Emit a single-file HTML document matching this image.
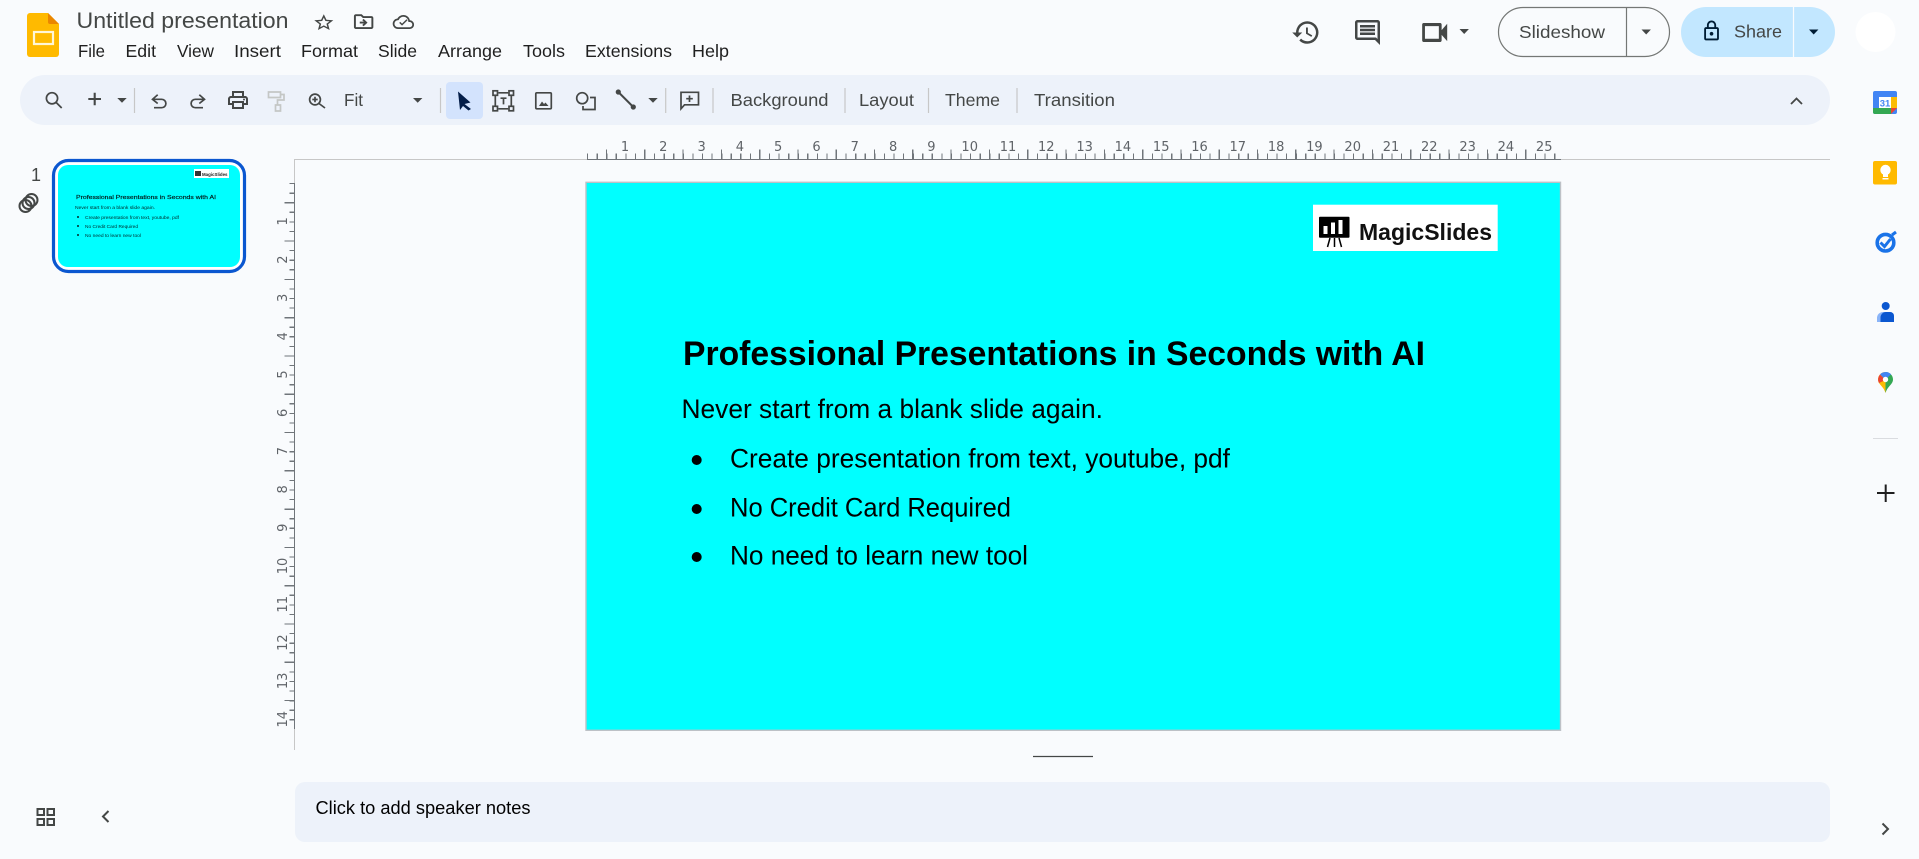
<!DOCTYPE html>
<html lang="en"><head><meta charset="utf-8"><title>Untitled presentation</title>
<style>html,body{margin:0;padding:0;background:#f9fbfd;overflow:hidden}svg{display:block}text{font-family:"Liberation Sans",Arial,sans-serif}</style></head>
<body>
<svg width="1919" height="859" viewBox="0 0 1919 859" xmlns="http://www.w3.org/2000/svg">
<rect width="1919" height="859" fill="#f9fbfd"/>

<!-- app logo -->
<path d="M30 13H48L59 24V54a3 3 0 0 1-3 3H30a3 3 0 0 1-3-3V16a3 3 0 0 1 3-3z" fill="#ffba00"/>
<path d="M48 13L59 24H50a2 2 0 0 1-2-2z" fill="#ea8600"/>
<rect x="34" y="32" width="19" height="12" fill="none" stroke="#fff6d6" stroke-width="2.2"/>

<!-- title + menus -->
<text x="76.5" y="28" font-size="22.5" fill="#444746" textLength="212" lengthAdjust="spacingAndGlyphs">Untitled presentation</text>
<g fill="#444746">
<path transform="translate(312.4,12.6) scale(.95,.83)" d="M22 9.24l-7.19-.62L12 2 9.19 8.63 2 9.24l5.46 4.73L5.82 21 12 17.27 18.18 21l-1.63-7.03L22 9.24zM12 15.4l-3.76 2.27 1-4.28-3.32-2.88 4.38-.38L12 6.1l1.71 4.04 4.38.38-3.32 2.88 1 4.28L12 15.4z"/>
<path transform="translate(352,10.6) scale(.97,.92)" d="M20 6h-8l-2-2H4c-1.1 0-2 .9-2 2v12c0 1.1.9 2 2 2h16c1.1 0 2-.9 2-2V8c0-1.1-.9-2-2-2zm0 12H4V6h5.17l2 2H20v10zm-8.01-9l-1.41 1.41L12.16 12H8v2h4.16l-1.59 1.59L11.99 17 16 13.01 11.99 9z"/>
<path transform="translate(392.7,11.5) scale(.89,.875)" d="M19.35 10.04C18.67 6.59 15.64 4 12 4 9.11 4 6.6 5.64 5.35 8.04 2.34 8.36 0 10.91 0 14c0 3.31 2.69 6 6 6h13c2.76 0 5-2.24 5-5 0-2.64-2.05-4.78-4.65-4.96zM19 18H6c-2.21 0-4-1.79-4-4 0-2.05 1.53-3.76 3.56-3.97l1.07-.11.5-.95C8.08 7.14 9.94 6 12 6c2.62 0 4.88 1.86 5.39 4.43l.3 1.5 1.53.11c1.56.1 2.78 1.41 2.78 2.96 0 1.65-1.35 3-3 3z"/>
<path transform="translate(392.7,11.5) scale(.89,.875)" d="M10.5 16.2l-3.2-3.2 1.2-1.2 2 2 5-5 1.2 1.2z"/>
</g>
<g font-size="17.5" fill="#1f1f1f">
<text x="78" y="57" textLength="27" lengthAdjust="spacingAndGlyphs">File</text>
<text x="125.5" y="57" textLength="30.5" lengthAdjust="spacingAndGlyphs">Edit</text>
<text x="177" y="57" textLength="37" lengthAdjust="spacingAndGlyphs">View</text>
<text x="234" y="57" textLength="47" lengthAdjust="spacingAndGlyphs">Insert</text>
<text x="301" y="57" textLength="57" lengthAdjust="spacingAndGlyphs">Format</text>
<text x="378" y="57" textLength="39" lengthAdjust="spacingAndGlyphs">Slide</text>
<text x="438" y="57" textLength="64" lengthAdjust="spacingAndGlyphs">Arrange</text>
<text x="523" y="57" textLength="42" lengthAdjust="spacingAndGlyphs">Tools</text>
<text x="585" y="57" textLength="87" lengthAdjust="spacingAndGlyphs">Extensions</text>
<text x="692" y="57" textLength="37" lengthAdjust="spacingAndGlyphs">Help</text>
</g>

<!-- top right -->
<g fill="#444746">
<path transform="translate(1291,17.5) scale(1.25)" d="M13 3a9 9 0 0 0-9 9H1l3.89 3.89.07.14L9 12H6c0-3.87 3.13-7 7-7s7 3.13 7 7-3.13 7-7 7c-1.93 0-3.68-.79-4.94-2.06l-1.42 1.42A8.954 8.954 0 0 0 13 21a9 9 0 0 0 0-18zm-1 5v5l4.28 2.54.72-1.21-3.5-2.08V8H12z"/>
<path transform="translate(1352.5,17.5) scale(1.25)" d="M21.99 4c0-1.1-.89-2-1.99-2H4c-1.1 0-2 .9-2 2v12c0 1.1.9 2 2 2h14l4 4-.01-18zM20 4v13.17L18.83 16H4V4h16zM6 12h12v2H6zm0-3h12v2H6zm0-3h12v2H6z"/>
<path transform="translate(1418,13.5) scale(1.39,1.58)" d="M15 8v8H5V8h10m1-2H4c-.55 0-1 .45-1 1v10c0 .55.45 1 1 1h12c.55 0 1-.45 1-1v-3.5l4 4v-11l-4 4V7c0-.55-.45-1-1-1z"/>
<path d="M1459.5 29h9.4l-4.7 5z"/>
</g>
<rect x="1498.5" y="7.5" width="171" height="49" rx="24.5" fill="none" stroke="#747775" stroke-width="1.2"/>
<line x1="1626.5" y1="7.5" x2="1626.5" y2="56.5" stroke="#747775" stroke-width="1.2"/>
<text x="1519" y="38" font-size="17.5" fill="#444746" textLength="86" lengthAdjust="spacingAndGlyphs">Slideshow</text>
<path d="M1641.500 29.500h9.400l-4.700 5z" fill="#444746"/>
<rect x="1681" y="7" width="154" height="50" rx="25" fill="#c2e7ff"/>
<line x1="1793.5" y1="7" x2="1793.5" y2="57" stroke="#f9fbfd" stroke-width="1.2"/>
<path transform="translate(1700.5,19.500) scale(.92,.95)" fill="#001d35" d="M18 8h-1V6c0-2.76-2.24-5-5-5S7 3.24 7 6v2H6c-1.1 0-2 .9-2 2v10c0 1.1.9 2 2 2h12c1.1 0 2-.9 2-2V10c0-1.1-.9-2-2-2zM9 6c0-1.66 1.34-3 3-3s3 1.34 3 3v2H9V6zm9 14H6V10h12v10zm-6-3c1.1 0 2-.9 2-2s-.9-2-2-2-2 .9-2 2 .9 2 2 2z"/>
<text x="1734" y="37.5" font-size="17.5" fill="#444746" textLength="48" lengthAdjust="spacingAndGlyphs">Share</text>
<path d="M1809 29.500h9.400l-4.700 5z" fill="#001d35"/>
<circle cx="1875.5" cy="32" r="20" fill="#fff"/>

<!-- toolbar -->
<rect x="20" y="75" width="1810" height="50" rx="25" fill="#edf2fa"/>
<rect x="446" y="82" width="37" height="37" rx="4" fill="#d3e3fd"/>
<g stroke="#c7c7c7" stroke-width="1.2">
<line x1="134.500" y1="88" x2="134.500" y2="113"/><line x1="440.5" y1="88" x2="440.5" y2="113"/><line x1="665.7" y1="88" x2="665.7" y2="113"/><line x1="713" y1="88" x2="713" y2="113"/><line x1="845" y1="88" x2="845" y2="113"/><line x1="928.5" y1="88" x2="928.5" y2="113"/><line x1="1017" y1="88" x2="1017" y2="113"/>
</g>
<g fill="none" stroke="#444746" stroke-width="1.700">
<circle cx="52" cy="98.300" r="5.600"/><path d="M56.200 102.500L61.700 108"/>
<path d="M88.300 99H101M94.700 92.700V105.300" stroke-width="2.100"/>
<path d="M157.700 94.700L152.500 99.300 157.700 103.500M152.500 99.300H161.700a4.200 4.200 0 0 1 0 8.400H154"/>
<path d="M199.300 94.700L204.500 99.300 199.300 103.500M204.500 99.300H195.300a4.200 4.200 0 0 0 0 8.400H203"/>
<path stroke="#c4c7c5" d="M268.500 92h12v5.500h-12zM280.500 94.500h3.500v5.500h-6.500v5M275.500 105h5v6h-5z"/>
<circle cx="315" cy="99.500" r="5.400"/><path d="M319 103.500L325 108M315 96.800v5.400M312.300 99.500h5.400"/>
<!-- textbox -->
<path d="M498.300 92.800h10M498.300 108.800h10M495.300 95.300v11M511.300 95.300v11"/>
<rect x="493" y="90.800" width="4.500" height="4.500"/><rect x="509" y="90.800" width="4.500" height="4.500"/><rect x="493" y="106.300" width="4.500" height="4.500"/><rect x="509" y="106.300" width="4.500" height="4.500"/>
<path d="M500.500 98.200h6M503.500 98.200v6.200"/>
<!-- image -->
<rect x="535.800" y="92.800" width="15.500" height="16" rx="1"/>
<!-- shape -->
<circle cx="582.200" cy="98.200" r="5.500"/><path d="M590 97.500H595V109.500H583V106"/>
<!-- add comment -->
<path d="M681 92.300h17.500v12.500h-14l-3.500 4zM689.500 95.500v6.500M686.200 98.700h6.600"/>
<!-- line -->
<path d="M618.300 92L633.300 107" stroke-width="2"/>
</g>
<circle cx="618.300" cy="92" r="2.600" fill="#444746"/><circle cx="633.300" cy="107" r="2.600" fill="#444746"/>
<g fill="#444746">
<path d="M117.300 98h9.400l-4.700 4.700z"/>
<path transform="translate(226,88)" d="M19 8h-1V3H6v5H5c-1.660 0-3 1.340-3 3v6h4v4h12v-4h4v-6c0-1.660-1.340-3-3-3zM8 5h8v3H8V5zm8 12v2H8v-4h8v2zm2-2v-2H6v2H4v-4c0-.550.450-1 1-1h14c.550 0 1 .450 1 1v4h-2z"/>
<circle cx="244" cy="99.500" r="1"/>
<path d="M413 98h9.400l-4.700 4.700z"/>
<path d="M648.300 98h9.400l-4.700 4.700z"/>
<path d="M539 106l3-4.500 2 2.500 1.500-1.500 3 3.500z"/>
</g>
<path d="M458 91.500L470.500 102.500 464.500 104 471 109 468.500 110.500 463 106 460 110z" fill="#041e49"/>
<g font-size="17.5" fill="#444746">
<text x="344" y="106" textLength="19" lengthAdjust="spacingAndGlyphs">Fit</text>
<text x="730.5" y="106" textLength="98" lengthAdjust="spacingAndGlyphs">Background</text>
<text x="859" y="106" textLength="55" lengthAdjust="spacingAndGlyphs">Layout</text>
<text x="945" y="106" textLength="55" lengthAdjust="spacingAndGlyphs">Theme</text>
<text x="1034" y="106" textLength="81" lengthAdjust="spacingAndGlyphs">Transition</text>
</g>
<path d="M1791 104l5.5-5.500 5.500 5.500" fill="none" stroke="#444746" stroke-width="1.800"/>

<!-- filmstrip -->
<text x="36" y="181" font-size="18" fill="#444746" text-anchor="middle">1</text>
<g fill="none" stroke="#444746" stroke-width="2" transform="rotate(-45 28.500 203)">
<circle cx="24.250" cy="203" r="6"/><circle cx="28.500" cy="203" r="6"/><circle cx="32.750" cy="203" r="6"/>
</g>
<rect x="53.500" y="160.500" width="191" height="111" rx="15" fill="#fff" stroke="#0b57d0" stroke-width="3.200"/>
<rect x="58" y="165" width="182" height="102" rx="10" fill="#00ffff"/>
<rect x="194" y="169" width="35" height="9" fill="#fff"/>
<rect x="195" y="171" width="6" height="5" fill="#333"/>
<text x="202" y="175.800" font-size="4.500" font-weight="bold" fill="#222" textLength="25.500" lengthAdjust="spacingAndGlyphs">MagicSlides</text>
<g fill="#000" fill-opacity=".85">
<text x="76" y="199" font-size="5.800" textLength="140" lengthAdjust="spacingAndGlyphs" stroke="#000" stroke-width=".15">Professional Presentations in Seconds with AI</text>
<text x="75" y="209" font-size="4.800" textLength="80" lengthAdjust="spacingAndGlyphs">Never start from a blank slide again.</text>
<circle cx="78" cy="217" r="1"/><circle cx="78" cy="226" r="1"/><circle cx="78" cy="235" r="1"/>
<text x="85" y="219" font-size="4.800" textLength="94" lengthAdjust="spacingAndGlyphs">Create presentation from text, youtube, pdf</text>
<text x="85" y="228" font-size="4.800" textLength="53" lengthAdjust="spacingAndGlyphs">No Credit Card Required</text>
<text x="85" y="237" font-size="4.800" textLength="56" lengthAdjust="spacingAndGlyphs">No need to learn new tool</text>
</g>

<!-- rulers -->
<g shape-rendering="crispEdges">
<line x1="294" y1="159.500" x2="587" y2="159.500" stroke="#c7c7c7" stroke-width="1.300"/>
<line x1="1561" y1="159.500" x2="1830" y2="159.500" stroke="#c7c7c7" stroke-width="1.300"/>
<line x1="587" y1="159.500" x2="1561" y2="159.500" stroke="#70757a" stroke-width="1.300"/>
<line x1="294.500" y1="159" x2="294.500" y2="183" stroke="#c7c7c7" stroke-width="1.300"/>
<line x1="294.500" y1="729" x2="294.500" y2="750" stroke="#c7c7c7" stroke-width="1.300"/>
<line x1="294.500" y1="183" x2="294.500" y2="729" stroke="#70757a" stroke-width="1.300"/>
<line x1="587" y1="156.500" x2="1561" y2="156.500" stroke="#70757a" stroke-width="6" stroke-dasharray="1.200 8.375"/>
<line x1="605.850" y1="154.500" x2="1561" y2="154.500" stroke="#70757a" stroke-width="10" stroke-dasharray="1.200 37.100"/>
<line x1="292" y1="183" x2="292" y2="729" stroke="#70757a" stroke-width="5" stroke-dasharray="1.200 8.375"/>
<line x1="289.500" y1="202.150" x2="289.500" y2="729" stroke="#70757a" stroke-width="10" stroke-dasharray="1.200 37.100"/>
</g>
<g font-size="13" fill="#5f6368" text-anchor="middle" style="font-family:'DejaVu Sans',sans-serif">
<text style="font-family:inherit" x="625" y="151">1</text><text style="font-family:inherit" x="663.300" y="151">2</text><text style="font-family:inherit" x="701.600" y="151">3</text><text style="font-family:inherit" x="739.900" y="151">4</text><text style="font-family:inherit" x="778.200" y="151">5</text><text style="font-family:inherit" x="816.500" y="151">6</text><text style="font-family:inherit" x="854.800" y="151">7</text><text style="font-family:inherit" x="893.100" y="151">8</text><text style="font-family:inherit" x="931.400" y="151">9</text><text style="font-family:inherit" x="969.700" y="151">10</text><text style="font-family:inherit" x="1008" y="151">11</text><text style="font-family:inherit" x="1046.300" y="151">12</text><text style="font-family:inherit" x="1084.600" y="151">13</text><text style="font-family:inherit" x="1122.900" y="151">14</text><text style="font-family:inherit" x="1161.200" y="151">15</text><text style="font-family:inherit" x="1199.500" y="151">16</text><text style="font-family:inherit" x="1237.800" y="151">17</text><text style="font-family:inherit" x="1276.100" y="151">18</text><text style="font-family:inherit" x="1314.400" y="151">19</text><text style="font-family:inherit" x="1352.700" y="151">20</text><text style="font-family:inherit" x="1391" y="151">21</text><text style="font-family:inherit" x="1429.300" y="151">22</text><text style="font-family:inherit" x="1467.600" y="151">23</text><text style="font-family:inherit" x="1505.900" y="151">24</text><text style="font-family:inherit" x="1544.200" y="151">25</text>
<text style="font-family:inherit" transform="translate(287,221.300) rotate(-90)">1</text><text style="font-family:inherit" transform="translate(287,259.600) rotate(-90)">2</text><text style="font-family:inherit" transform="translate(287,297.900) rotate(-90)">3</text><text style="font-family:inherit" transform="translate(287,336.200) rotate(-90)">4</text><text style="font-family:inherit" transform="translate(287,374.500) rotate(-90)">5</text><text style="font-family:inherit" transform="translate(287,412.800) rotate(-90)">6</text><text style="font-family:inherit" transform="translate(287,451.100) rotate(-90)">7</text><text style="font-family:inherit" transform="translate(287,489.400) rotate(-90)">8</text><text style="font-family:inherit" transform="translate(287,527.700) rotate(-90)">9</text><text style="font-family:inherit" transform="translate(287,566) rotate(-90)">10</text><text style="font-family:inherit" transform="translate(287,604.300) rotate(-90)">11</text><text style="font-family:inherit" transform="translate(287,642.600) rotate(-90)">12</text><text style="font-family:inherit" transform="translate(287,680.900) rotate(-90)">13</text><text style="font-family:inherit" transform="translate(287,719.200) rotate(-90)">14</text>
</g>

<!-- slide -->
<rect x="586" y="182.300" width="974.500" height="548" fill="#00ffff" stroke="#bdc1c6" stroke-width="1.400"/>
<rect x="1313" y="204.700" width="184.700" height="46.300" fill="#fff"/>
<rect x="1319" y="216.700" width="30.500" height="21" rx="1" fill="#000"/>
<rect x="1323.500" y="226" width="4" height="8" fill="#fff"/><rect x="1331" y="222.500" width="4" height="11.500" fill="#fff"/><rect x="1338.500" y="220" width="4" height="14" fill="#fff"/>
<path d="M1330 238l-2.500 9M1334.500 238v9M1339 238l2.500 9" stroke="#000" stroke-width="1.500" fill="none"/>
<text x="1359" y="240" font-size="23.500" font-weight="bold" fill="#111" textLength="133" lengthAdjust="spacingAndGlyphs">MagicSlides</text>
<g fill="#000">
<text x="683" y="365" font-size="34" font-weight="bold" textLength="742" lengthAdjust="spacingAndGlyphs">Professional Presentations in Seconds with AI</text>
<text x="681.500" y="418" font-size="26.500" textLength="421.500" lengthAdjust="spacingAndGlyphs">Never start from a blank slide again.</text>
<circle cx="696.700" cy="460" r="5"/><circle cx="696.700" cy="509" r="5"/><circle cx="696.700" cy="557" r="5"/>
<text x="730" y="467.700" font-size="26.500" textLength="500" lengthAdjust="spacingAndGlyphs">Create presentation from text, youtube, pdf</text>
<text x="730" y="516.700" font-size="26.500" textLength="281" lengthAdjust="spacingAndGlyphs">No Credit Card Required</text>
<text x="730" y="564.300" font-size="26.500" textLength="298" lengthAdjust="spacingAndGlyphs">No need to learn new tool</text>
</g>

<!-- bottom -->
<line x1="1033" y1="756.500" x2="1093" y2="756.500" stroke="#444746" stroke-width="1.200"/>
<rect x="295" y="782" width="1535" height="60" rx="10" fill="#edf2fa"/>
<text x="315.500" y="814" font-size="18" fill="#000" textLength="215" lengthAdjust="spacingAndGlyphs">Click to add speaker notes</text>
<g fill="none" stroke="#444746" stroke-width="2">
<rect x="37.500" y="809" width="6.500" height="6"/><rect x="47.500" y="809" width="6.500" height="6"/><rect x="37.500" y="819" width="6.500" height="6"/><rect x="47.500" y="819" width="6.500" height="6"/>
<path d="M108.500 811l-5.500 5.500 5.500 5.500"/>
<path d="M1882.500 823.500l5.500 5.500-5.500 5.500"/>
</g>

<!-- side panel -->
<rect x="1873" y="91" width="24" height="23" rx="2" fill="#4285f4"/>
<rect x="1891" y="97" width="6" height="11" fill="#fbbc04"/>
<path d="M1873 108h18v6h-16a2 2 0 0 1-2-2z" fill="#34a853"/>
<path d="M1891 108h6l-6 6z" fill="#ea4335"/>
<rect x="1879" y="97" width="12" height="11" fill="#fff"/>
<text x="1885" y="106.500" font-size="9.500" font-weight="bold" fill="#4285f4" text-anchor="middle">31</text>
<rect x="1873" y="161" width="24" height="23.500" rx="2" fill="#ffba00"/>
<circle cx="1885.500" cy="170" r="5.200" fill="#fff"/><rect x="1883" y="174" width="5" height="3" fill="#fff"/><rect x="1882.500" y="178" width="6" height="1.500" fill="#fff"/>
<circle cx="1885.500" cy="242.700" r="8.300" fill="none" stroke="#1a73e8" stroke-width="3.600"/>
<path d="M1880.500 242.500l4 4 6-7.500" fill="none" stroke="#1a73e8" stroke-width="3"/>
<path d="M1892 235l4-3" stroke="#1a73e8" stroke-width="3"/>
<circle cx="1885.700" cy="306" r="4" fill="#0b57d0"/>
<path d="M1877 322v-4a6 6 0 0 1 6-6h7a4 4 0 0 1 4 4v6z" fill="#8ab4f8"/>
<path d="M1880.500 322v-4.500a5.500 5.500 0 0 1 5.500-5.500h4a4 4 0 0 1 4 4v6z" fill="#0b57d0"/>
<path d="M1885.500 372a7.500 7.500 0 0 1 7.500 7.500c0 5-5.500 6.500-7.500 13.500z" fill="#34a853"/>
<path d="M1885.500 372a7.500 7.500 0 0 0-7.500 7.500c0 5 5.500 6.500 7.500 13.500z" fill="#fbbc04"/>
<path d="M1880 374.500a7.500 7.500 0 0 1 11-.3l-5.500 5.500z" fill="#4285f4"/>
<path d="M1880 374.500l5.500 5.500-6.500 3a7.500 7.500 0 0 1 1-8.500z" fill="#ea4335"/>
<circle cx="1885.500" cy="379.500" r="2.700" fill="#fff"/>
<line x1="1873" y1="438.500" x2="1898" y2="438.500" stroke="#dadce0" stroke-width="1"/>
<path d="M1877 493h17.500M1885.700 484.500v17.500" stroke="#1f1f1f" stroke-width="2"/>
</svg>
</body></html>
